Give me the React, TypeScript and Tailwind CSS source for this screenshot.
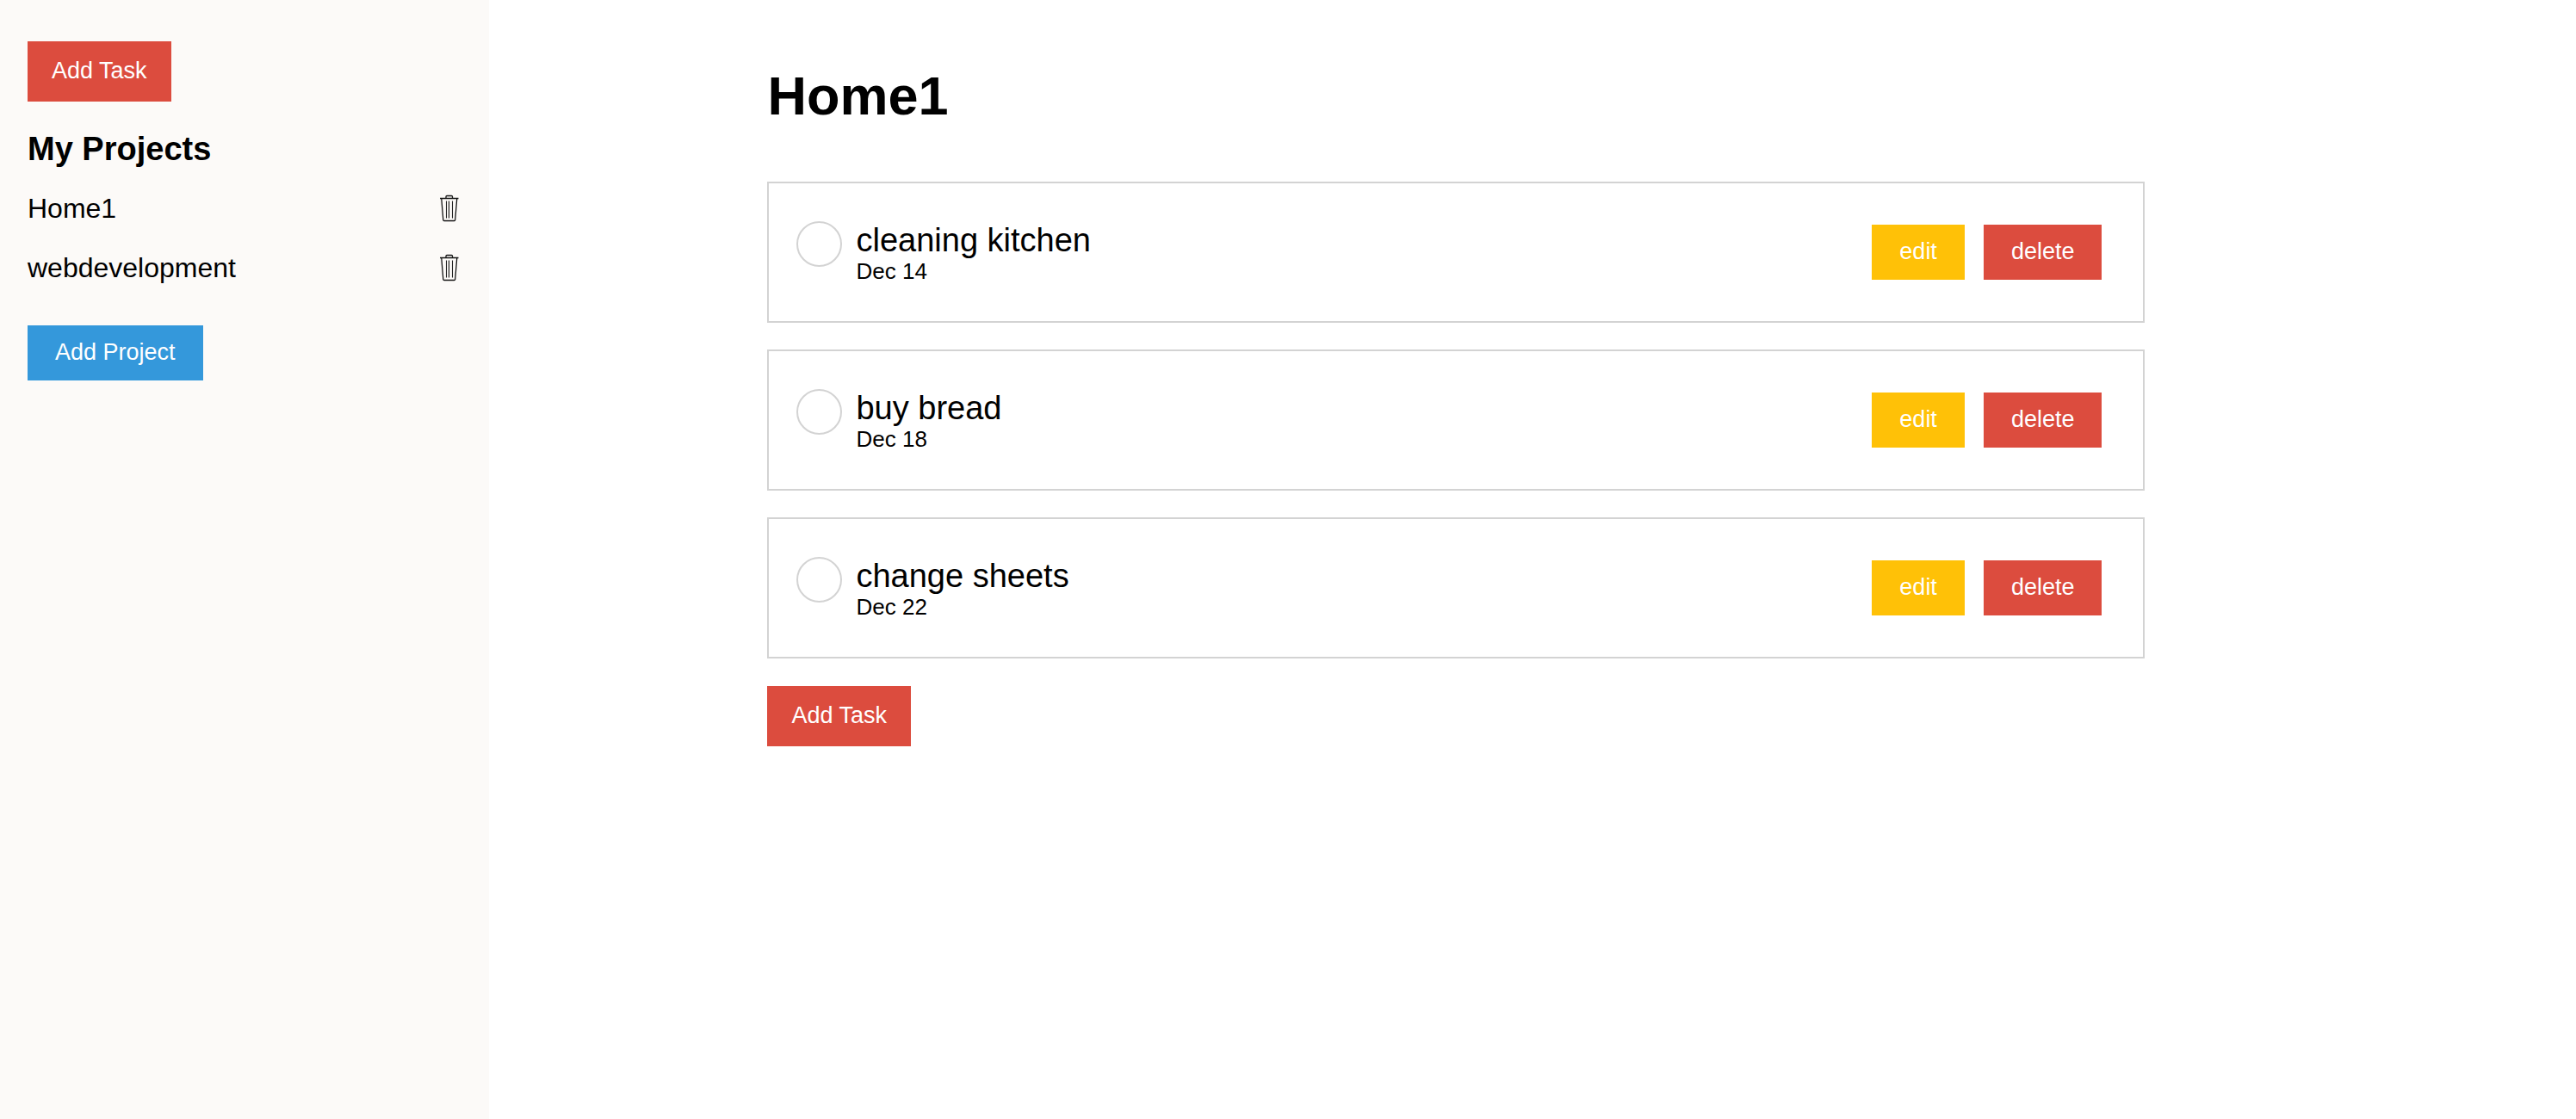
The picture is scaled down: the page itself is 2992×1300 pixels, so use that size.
import React from "react";

const projects = ["Home1", "webdevelopment"];

const tasks = [
  { id: "kitchen", title: "cleaning kitchen", date: "Dec 14" },
  { id: "bread", title: "buy bread", date: "Dec 18" },
  { id: "sheets", title: "change sheets", date: "Dec 22" },
];

function TrashIcon() {
  return (
    <svg
      width="28"
      height="34"
      viewBox="0 0 28 34"
      fill="none"
      stroke="#141414"
      strokeWidth="1.3"
      strokeLinejoin="round"
      aria-hidden="true"
    >
      <path d="M10 4.500V2.500Q10 1.500 11 1.500h5.500Q17.500 1.500 17.500 2.500V4.500" />
      <path d="M3 4.500h21.500" strokeWidth="1.500" />
      <path d="M4.800 5l2 24.500Q6.900 30.500 7.900 30.500h11.700Q20.600 30.500 20.700 29.500l2-24.500" />
      <path d="M10.500 7.500v20M13.500 7.500v20M17.500 7.500v20" strokeWidth="1.100" />
    </svg>
  );
}

function AddTaskButton() {
  return (
    <button type="button" className="h-[70px] bg-[#dc4c3e] px-7 pb-0.5 text-[27px] leading-8 text-white">
      Add Task
    </button>
  );
}

function Sidebar() {
  return (
    <aside className="w-[19%] shrink-0 bg-[#fcfaf8] px-8 pt-12">
      <AddTaskButton />
      <h2 className="mt-[33px] text-[38px] font-bold leading-11">My Projects</h2>
      <ul className="mt-[29px] flex flex-col gap-8">
        {projects.map((name) => (
          <li key={name} className="flex items-center justify-between text-[32px] leading-[37px]">
            <a href="#">{name}</a>
            <button type="button" aria-label={`Delete project ${name}`}>
              <TrashIcon />
            </button>
          </li>
        ))}
      </ul>
      <button type="button" className="mt-12 bg-[#3498db] px-8 pb-[17px] pt-[15px] text-[27px] leading-8 text-white">
        Add Project
      </button>
    </aside>
  );
}

export default function App() {
  return (
    <div className="flex min-h-screen bg-white font-['Liberation_Sans',Arial,sans-serif] text-black">
      <Sidebar />
      <main className="flex-1 pl-[323px] pr-8 pt-[74px]">
        <div className="max-w-[1600px]">
          <h1 className="text-[63px] font-bold leading-[74px]">Home1</h1>
          <ul className="mt-[63px] flex flex-col gap-[31px]">
            {tasks.map((task) => (
              <li
                key={task.id}
                className="flex items-center justify-between border-2 border-[#d3d3d3] py-11 pl-8 pr-12"
              >
                <div className="flex items-start gap-4">
                  <input
                    id={task.id}
                    type="checkbox"
                    className="size-[53px] appearance-none rounded-full border-2 border-[#d3d3d3] checked:bg-[#d3d3d3]"
                  />
                  <label htmlFor={task.id} className="flex flex-col">
                    <span className="text-[38px] leading-11">{task.title}</span>
                    <span className="text-[26px] leading-7">{task.date}</span>
                  </label>
                </div>
                <div className="flex gap-[22px] text-[27px] leading-8 text-white">
                  <button type="button" className="bg-[#ffc107] px-8 pb-[17px] pt-[15px]">
                    edit
                  </button>
                  <button type="button" className="bg-[#dc4c3e] px-8 pb-[17px] pt-[15px]">
                    delete
                  </button>
                </div>
              </li>
            ))}
          </ul>
          <div className="mt-8">
            <AddTaskButton />
          </div>
        </div>
      </main>
    </div>
  );
}
